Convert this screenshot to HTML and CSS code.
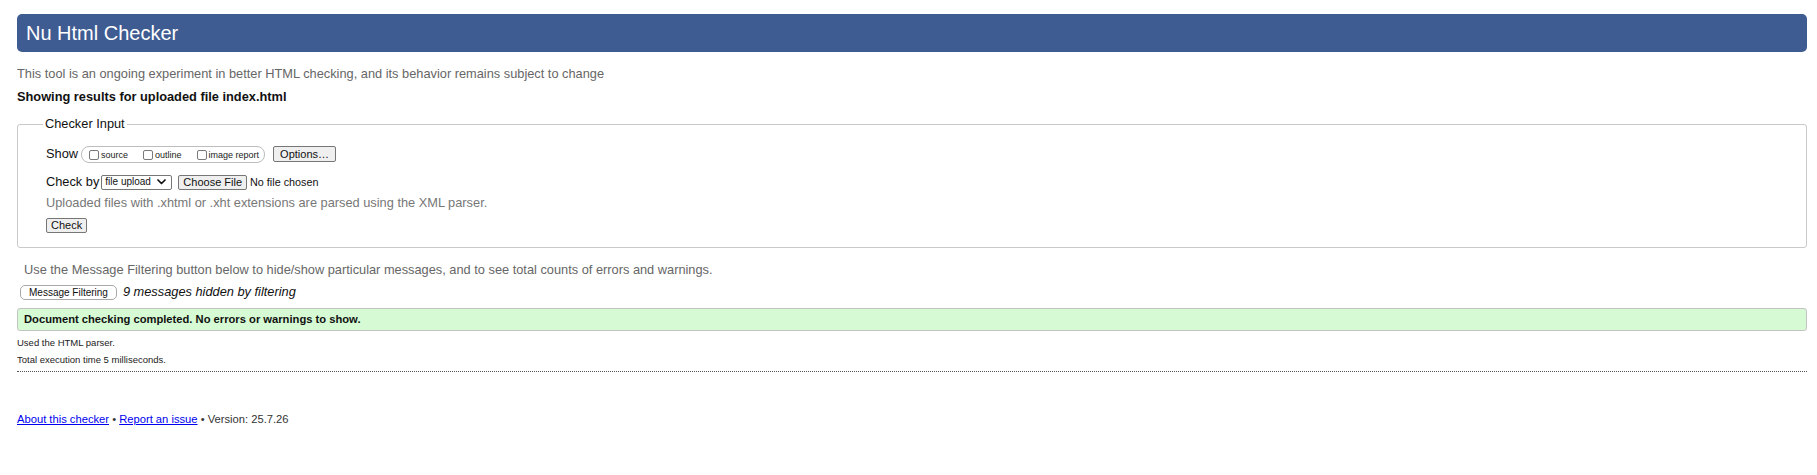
FILE: index.html
```html
<!DOCTYPE html>
<html lang="en">
<head>
<meta charset="utf-8">
<title>Showing results for uploaded file index.html - Nu Html Checker</title>
<link rel="stylesheet" href="styles.css">
</head>
<body>
<h1 class="title">Nu Html Checker</h1>
<p class="intro">This tool is an ongoing experiment in better HTML checking, and its behavior remains subject to change</p>
<p class="showing">Showing results for uploaded file index.html</p>

<fieldset class="checker">
  <legend class="checker-legend">Checker Input</legend>
  <div class="row row-show">
    <span class="row-label">Show</span>
    <span class="pill">
      <label class="opt"><input type="checkbox" class="cb"><span class="opt-text">source</span></label>
      <label class="opt"><input type="checkbox" class="cb"><span class="opt-text">outline</span></label>
      <label class="opt opt-last"><input type="checkbox" class="cb"><span class="opt-text">image report</span></label>
    </span>
    <button type="button" class="btn btn-options">Options…</button>
  </div>
  <div class="row row-checkby">
    <span class="row-label">Check by</span>
    <span class="select">
      <span class="select-text">file upload</span>
      <svg class="chev" width="9" height="6" viewBox="0 0 9 6"><polyline points="1,1 4.5,4.5 8,1" fill="none" stroke="#111" stroke-width="1.7" stroke-linecap="round" stroke-linejoin="round"/></svg>
    </span>
    <button type="button" class="btn btn-file">Choose File</button>
    <span class="file-status">No file chosen</span>
  </div>
  <p class="hint">Uploaded files with .xhtml or .xht extensions are parsed using the XML parser.</p>
  <div class="row row-submit">
    <button type="submit" class="btn btn-check">Check</button>
  </div>
</fieldset>

<p class="filter-note">Use the Message Filtering button below to hide/show particular messages, and to see total counts of errors and warnings.</p>
<div class="filter-row">
  <button type="button" class="btn-filter">Message Filtering</button>
  <em class="filter-count">9 messages hidden by filtering</em>
</div>

<div class="results">
  <p class="success">Document checking completed. No errors or warnings to show.</p>
  <p class="meta">Used the HTML parser.</p>
  <p class="meta">Total execution time 5 milliseconds.</p>
</div>

<p class="footer"><a href="#about">About this checker</a> • <a href="#issue">Report an issue</a> • Version: 25.7.26</p>
</body>
</html>
```
FILE: styles.css
```css
html {
  background: #fff;
}
body {
  margin: 14px 10px 0 17px;
  font-family: "Liberation Sans", Arial, Helvetica, sans-serif;
  font-size: 12.8px;
  line-height: 16px;
  color: #222;
}
p {
  margin: 0;
}
.title {
  margin: 0;
  padding: 7px 9px;
  font-size: 20px;
  line-height: 24px;
  font-weight: normal;
  color: #fff;
  background: #3e5c91;
  border-radius: 5px;
}
.intro {
  margin-top: 14px;
  color: #666;
}
.showing {
  margin-top: 7px;
  font-weight: bold;
  color: #111;
}
.checker {
  margin: 11px 0 0 0;
  padding: 12px 20px 14px 28px;
  border: 1px solid #c9c9c9;
  border-radius: 3px;
  min-width: 0;
}
.checker-legend {
  padding: 0 2px;
  margin-left: -3px;
  line-height: 16px;
  color: #111;
}
.row {
  display: flex;
  align-items: center;
}
.row-show {
  height: 20px;
}
.row-checkby {
  height: 20px;
  margin-top: 8px;
}
.row-label {
  color: #111;
}
.pill {
  display: inline-flex;
  align-items: flex-end;
  height: 15px;
  margin-left: 3px;
  padding: 0 5px 0 7px;
  border: 1px solid #bdbdbd;
  border-radius: 8px;
}
.opt {
  display: inline-flex;
  align-items: flex-end;
  margin-right: 15px;
  padding-bottom: 2px;
}
.opt-last {
  margin-right: 0;
}
.cb {
  appearance: none;
  -webkit-appearance: none;
  width: 10px;
  height: 10px;
  margin: 0 2px 0 0;
  border: 1px solid #7a7a7a;
  border-radius: 2px;
  background: #fff;
}
.opt-text {
  font-size: 9px;
  line-height: 9px;
  color: #222;
}
.btn {
  font-family: "Liberation Sans", Arial, Helvetica, sans-serif;
  font-size: 11px;
  line-height: 13px;
  color: #111;
  background: #efefef;
  border: 1px solid #767676;
  border-radius: 2px;
  padding: 0 4px;
  margin: 0;
}
.btn-options {
  margin-left: 8px;
  height: 16px;
  padding: 0 6px;
}
.select {
  display: inline-flex;
  align-items: center;
  margin-left: 2px;
  height: 15px;
  width: 71px;
  box-sizing: border-box;
  padding: 0 5px 0 3px;
  border: 1px solid #767676;
  border-radius: 2px;
  background: #fff;
}
.select-text {
  font-size: 10px;
  line-height: 12px;
  color: #111;
  flex: 1;
}
.chev {
  display: block;
}
.btn-file {
  margin-left: 6px;
  height: 15px;
}
.file-status {
  margin-left: 3px;
  font-size: 10.8px;
  color: #111;
}
.hint {
  margin-top: 3px;
  color: #777;
}
.row-submit {
  margin-top: 7px;
}
.btn-check {
  height: 15px;
}
.filter-note {
  margin-top: 14px;
  padding-left: 7px;
  color: #666;
}
.filter-row {
  display: flex;
  align-items: center;
  margin-top: 6px;
  height: 16px;
  padding-left: 3px;
}
.btn-filter {
  font-family: "Liberation Sans", Arial, Helvetica, sans-serif;
  font-size: 10px;
  line-height: 13px;
  height: 15px;
  padding: 0 8px;
  margin: 0;
  color: #111;
  background: #fff;
  border: 1px solid #a9a9a9;
  border-radius: 5px;
}
.filter-count {
  margin-left: 6px;
  color: #111;
}
.results {
  margin-top: 8px;
  padding-bottom: 6px;
  border-bottom: 1px dotted #555;
}
.success {
  padding: 4px 6px;
  font-size: 11.2px;
  line-height: 13px;
  font-weight: bold;
  color: #111;
  background: #d6fbd4;
  border: 1px solid #c4c4c4;
  border-radius: 3px;
}
.meta {
  margin-top: 6px;
  font-size: 9.5px;
  line-height: 11px;
  color: #222;
}
.footer {
  margin-top: 41px;
  font-size: 11.2px;
  line-height: 13px;
  color: #333;
}
.footer a {
  color: #0000ee;
  text-decoration: underline;
}
```
